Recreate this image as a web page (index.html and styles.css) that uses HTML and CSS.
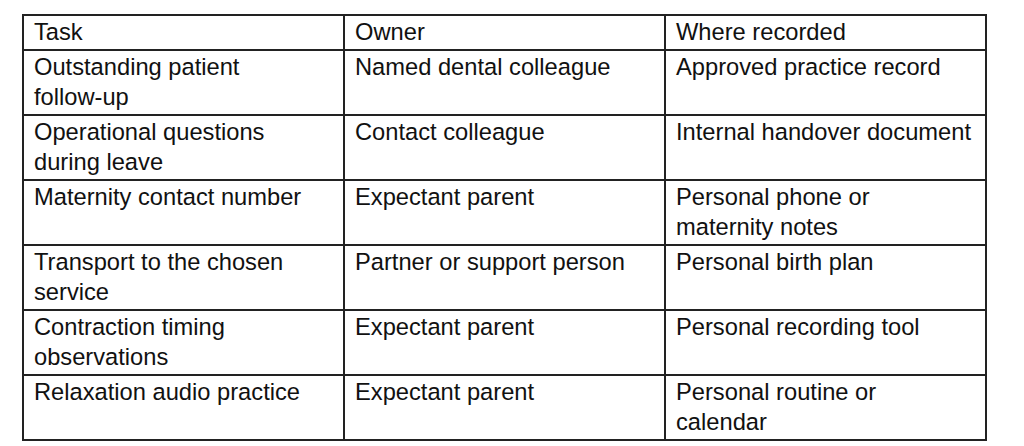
FILE: index.html
```html
<!DOCTYPE html>
<html lang="en">
<head>
<meta charset="utf-8">
<title>Tasks</title>
<link rel="stylesheet" href="styles.css">
</head>
<body>
<table class="tasks">
  <colgroup><col class="c"><col class="c"><col class="c"></colgroup>
  <thead>
    <tr><th>Task</th><th>Owner</th><th>Where recorded</th></tr>
  </thead>
  <tbody>
    <tr><td>Outstanding patient <span class="nw">follow-up</span></td><td>Named dental colleague</td><td>Approved practice record</td></tr>
    <tr><td>Operational questions during leave</td><td>Contact colleague</td><td>Internal handover document</td></tr>
    <tr><td>Maternity contact number</td><td>Expectant parent</td><td>Personal phone or maternity notes</td></tr>
    <tr><td>Transport to the chosen service</td><td>Partner or support person</td><td>Personal birth plan</td></tr>
    <tr><td>Contraction timing observations</td><td>Expectant parent</td><td>Personal recording tool</td></tr>
    <tr><td>Relaxation audio practice</td><td>Expectant parent</td><td>Personal routine or calendar</td></tr>
  </tbody>
</table>
</body>
</html>
```
FILE: styles.css
```css
html, body {
  background: #fff;
}
body {
  margin: 14px 0 0 22px;
  font-family: "Liberation Sans", Arial, sans-serif;
  color: #111;
}
.tasks {
  border-collapse: collapse;
  table-layout: fixed;
  width: 963px;
  font-size: 23.7px;
  line-height: 30px;
}
.tasks .c {
  width: 321px;
}
.tasks th,
.tasks td {
  border: 2px solid #222;
  padding: 1px 13px 2px 10px;
  text-align: left;
  vertical-align: top;
  font-weight: normal;
}
.tasks tbody td {
  height: 60px;
  box-sizing: content-box;
}
.nw {
  white-space: nowrap;
}
```
